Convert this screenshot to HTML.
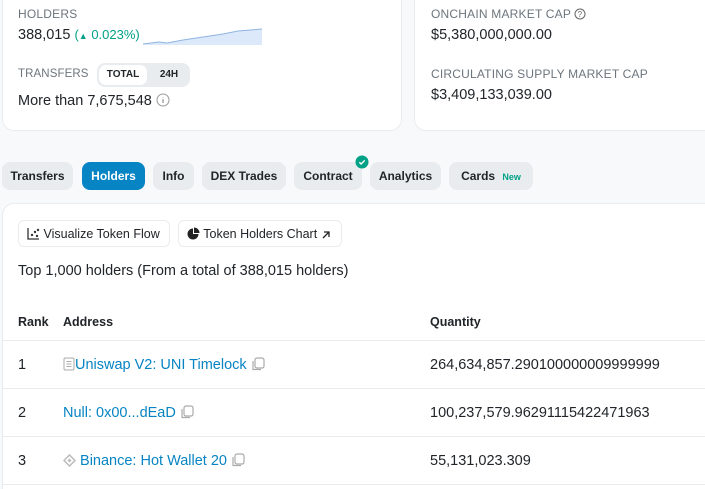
<html><head><style>
html,body{margin:0;width:705px;height:489px;overflow:hidden}
body{background:#f8f9fa;font-family:"Liberation Sans",sans-serif;color:#212529;position:relative}
.card{position:absolute;background:#fff;border:1px solid #e9ecef;border-radius:12px}
.lbl{position:absolute;font-size:12px;color:#6c757d;letter-spacing:.2px}
.v{position:absolute;font-size:14.5px}
.tab{position:absolute;top:162px;height:28px;line-height:28px;background:#e9ecef;border-radius:8px;font-size:12px;font-weight:bold;text-align:center}
.btn{position:absolute;top:220px;height:27px;line-height:27px;border:1px solid #e9ecef;border-radius:6px;font-size:12.5px;box-sizing:border-box;padding-left:8px;white-space:nowrap}
.line{position:absolute;left:3px;right:0;height:1px;background:#e9ecef}
.a{color:#0784c3}
.t{position:absolute;font-size:14.5px;white-space:nowrap}
svg{vertical-align:-2px}
</style></head><body>
<div class="card" style="left:2px;top:-15px;width:398px;height:144px"></div>
<div class="card" style="left:414px;top:-15px;width:310px;height:144px"></div>
<div class="lbl" style="left:18px;top:7px">HOLDERS</div>
<div class="v" style="left:18px;top:27px">388,015 <span style="color:#00a186;font-size:13px">(<span style="font-size:9px">&#9650;</span> 0.023%)</span></div>
<svg style="position:absolute;left:143px;top:28px" width="120" height="17"><path d="M0 16 L16 14 L24 15 L40 12 L60 9 L80 6 L95 3 L119 1 L119 17 L0 17Z" fill="#dbe9fa"/><path d="M0 16 L16 14 L24 15 L40 12 L60 9 L80 6 L95 3 L119 1" stroke="#8fb4e0" fill="none"/></svg>
<div class="lbl" style="left:18px;top:68px;letter-spacing:.1px;font-size:11.5px">TRANSFERS</div>
<div style="position:absolute;left:97px;top:63px;width:93px;height:24px;background:#e9ecef;border-radius:8px"></div>
<div style="position:absolute;left:99px;top:65px;width:48px;height:20px;background:#fff;border-radius:7px;font-size:10px;font-weight:bold;text-align:center;line-height:20px">TOTAL</div>
<div style="position:absolute;left:150px;top:65px;width:38px;height:20px;font-size:10px;font-weight:bold;text-align:center;line-height:20px">24H</div>
<div class="v" style="left:18px;top:93px">More than 7,675,548 <svg width="14" height="14"><circle cx="7" cy="7" r="6" fill="none" stroke="#999"/><path d="M7 6v4M7 4v.5" stroke="#999" stroke-width="1.3"/></svg></div>
<div class="lbl" style="left:431px;top:7px">ONCHAIN MARKET CAP <svg width="12" height="12"><circle cx="6" cy="6" r="5" fill="none" stroke="#666"/><text x="6" y="9" font-size="8" text-anchor="middle" fill="#666" font-family="Liberation Sans">?</text></svg></div>
<div class="v" style="left:431px;top:27px">$5,380,000,000.00</div>
<div class="lbl" style="left:431px;top:67px">CIRCULATING SUPPLY MARKET CAP</div>
<div class="v" style="left:431px;top:87px">$3,409,133,039.00</div>
<div class="tab" style="left:2px;width:71px">Transfers</div>
<div class="tab" style="left:82px;width:63px;background:#0784c3;color:#fff">Holders</div>
<div class="tab" style="left:153px;width:41px">Info</div>
<div class="tab" style="left:202px;width:84px">DEX Trades</div>
<div class="tab" style="left:294px;width:68px">Contract</div>
<svg style="position:absolute;left:355px;top:155px" width="14" height="14"><circle cx="7" cy="7" r="6.5" fill="#00a186"/><path d="M4.3 7.2l1.8 1.8 3.6-3.6" stroke="#fff" stroke-width="1.4" fill="none"/></svg>
<div class="tab" style="left:370px;width:71px">Analytics</div>
<div class="tab" style="left:449px;width:84px">Cards <span style="color:#00a186;font-size:9px;margin-left:4px">New</span></div>
<div class="card" style="left:2px;top:203px;width:720px;height:300px"></div>
<div class="btn" style="left:18px;width:152px"><svg width="13" height="13"><path d="M1 1v11h11" stroke="#333" fill="none" stroke-width="1.3"/><circle cx="5" cy="8" r="1.2" fill="#333"/><circle cx="8" cy="5" r="1.2" fill="#333"/><circle cx="10" cy="9" r="1.2" fill="#333"/><circle cx="11" cy="3" r="1.2" fill="#333"/></svg> Visualize Token Flow</div>
<div class="btn" style="left:178px;width:164px"><svg width="13" height="13"><path d="M6 1.5A5.5 5.5 0 1 0 11.5 7H6Z" fill="#222"/><path d="M7 0.5A5.5 5.5 0 0 1 12.5 6H7Z" fill="#222"/></svg> Token Holders Chart <svg width="10" height="10"><path d="M2 8L8 2M3 2h5v5" stroke="#222" stroke-width="1.3" fill="none"/></svg></div>
<div class="t" style="left:18px;top:263px">Top 1,000 holders (From a total of 388,015 holders)</div>
<div style="position:absolute;left:18px;top:315px;font-size:12.5px;font-weight:bold">Rank</div>
<div style="position:absolute;left:63px;top:315px;font-size:12.5px;font-weight:bold">Address</div>
<div style="position:absolute;left:430px;top:315px;font-size:12.5px;font-weight:bold">Quantity</div>
<div class="line" style="top:340px"></div><div class="line" style="top:388px"></div><div class="line" style="top:436px"></div><div class="line" style="top:484px"></div>
<div class="t" style="left:18px;top:357px">1</div><div class="t a" style="left:63px;top:357px"><svg width="12" height="14"><rect x="1" y="1" width="10" height="12" rx="1.5" fill="none" stroke="#aaa"/><path d="M3.5 4.5h5M3.5 7h5M3.5 9.5h5" stroke="#aaa"/></svg>Uniswap V2: UNI Timelock <svg width="14" height="14"><rect x="4" y="1" width="9" height="10" rx="2" fill="none" stroke="#aaa" stroke-width="1.2"/><path d="M2 4v8.5h8" fill="none" stroke="#aaa" stroke-width="1.2"/></svg></div><div class="t" style="left:430px;top:357px">264,634,857.290100000009999999</div>
<div class="t" style="left:18px;top:405px">2</div><div class="t a" style="left:63px;top:405px">Null: 0x00...dEaD <svg width="14" height="14"><rect x="4" y="1" width="9" height="10" rx="2" fill="none" stroke="#aaa" stroke-width="1.2"/><path d="M2 4v8.5h8" fill="none" stroke="#aaa" stroke-width="1.2"/></svg></div><div class="t" style="left:430px;top:405px">100,237,579.96291115422471963</div>
<div class="t" style="left:18px;top:453px">3</div><div class="t a" style="left:63px;top:453px"><svg width="13" height="13"><path d="M6.5 1l5.5 5.5-5.5 5.5L1 6.5Z" fill="none" stroke="#bbb" stroke-width="1.5"/><path d="M6.5 4.5l2 2-2 2-2-2Z" fill="#bbb"/></svg> Binance: Hot Wallet 20 <svg width="14" height="14"><rect x="4" y="1" width="9" height="10" rx="2" fill="none" stroke="#aaa" stroke-width="1.2"/><path d="M2 4v8.5h8" fill="none" stroke="#aaa" stroke-width="1.2"/></svg></div><div class="t" style="left:430px;top:453px">55,131,023.309</div>
</body></html>
